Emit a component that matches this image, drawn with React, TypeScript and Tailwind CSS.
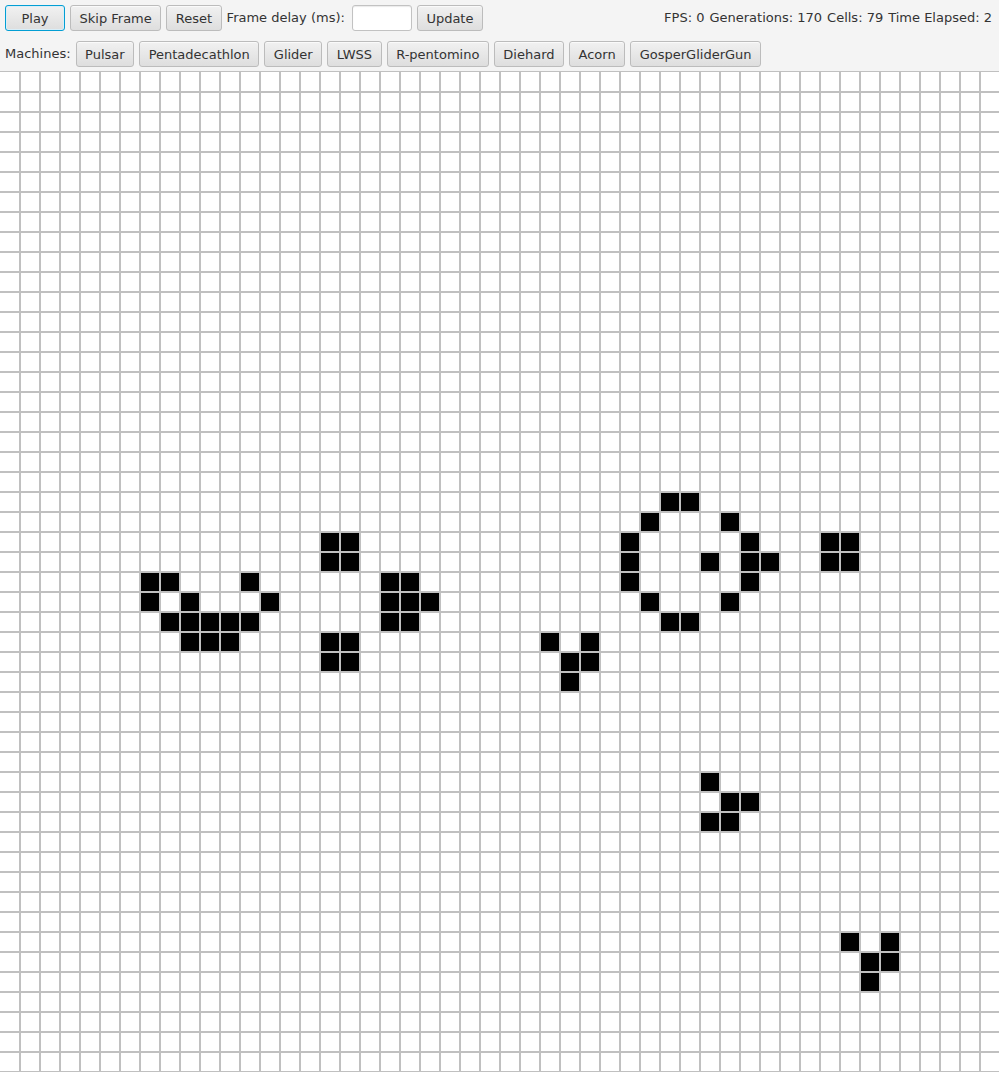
import React from "react";

const COLS = 50;
const ROWS = 50;

const alive: [number, number][] = [
  // pattern 1
  [7, 25], [8, 25], [12, 25],
  [7, 26], [9, 26], [13, 26],
  [8, 27], [9, 27], [10, 27], [11, 27], [12, 27],
  [9, 28], [10, 28], [11, 28],
  // pattern 2
  [16, 23], [17, 23], [16, 24], [17, 24],
  [16, 28], [17, 28], [16, 29], [17, 29],
  [19, 25], [20, 25], [19, 26], [20, 26], [21, 26], [19, 27], [20, 27],
  // pattern 3
  [27, 28], [29, 28], [28, 29], [29, 29], [28, 30],
  // pattern 4
  [33, 21], [34, 21],
  [32, 22], [36, 22],
  [31, 23], [37, 23],
  [31, 24], [35, 24], [37, 24], [38, 24],
  [31, 25], [37, 25],
  [32, 26], [36, 26],
  [33, 27], [34, 27],
  // block
  [41, 23], [42, 23], [41, 24], [42, 24],
  // pattern 5
  [35, 35], [36, 36], [37, 36], [35, 37], [36, 37],
  // pattern 6
  [42, 43], [44, 43], [43, 44], [44, 44], [43, 45],
];

function Btn({ children, focused, className }: { children: React.ReactNode; focused?: boolean; className?: string }) {
  return (
    <button
      className={
        "h-[26px] px-[8.5px] rounded-[3px] border text-[13px] leading-none text-[#333333] whitespace-nowrap flex items-center justify-center bg-gradient-to-b from-[#f1f1f1] to-[#dedede] " +
        (focused
          ? "border-[#039ed3] shadow-[inset_0_0_0_1px_#d9eef8] "
          : "border-[#bcbcbc] shadow-[inset_0_1px_0_#fafafa] ") +
        (className ?? "")
      }
    >
      {children}
    </button>
  );
}

export default function App() {
  return (
    <div
      className="w-[999px] h-[1072px] overflow-hidden bg-[#f4f4f4] flex flex-col"
      style={{ fontFamily: '"DejaVu Sans", "Liberation Sans", sans-serif' }}
    >
      <div className="flex flex-col gap-[10px] pt-[5px] pb-[4px] px-[5px] text-[13px] text-[#333333]">
        <div className="flex items-center gap-[5px] h-[26px]">
          <Btn focused className="w-[60px]">Play</Btn>
          <Btn>Skip Frame</Btn>
          <Btn>Reset</Btn>
          <span className="whitespace-nowrap pr-[2px]">Frame delay (ms):</span>
          <input
            className="w-[60px] h-[26px] bg-white border border-[#c2c2c2] rounded-[3px] outline-none shadow-[inset_0_1px_1px_#eaeaea]"
            type="text"
          />
          <Btn>Update</Btn>
          <div className="ml-auto flex items-center gap-[5px] whitespace-nowrap pr-[2px]">
            <span>FPS: 0</span>
            <span>Generations: 170</span>
            <span>Cells: 79</span>
            <span>Time Elapsed: 2</span>
          </div>
        </div>
        <div className="flex items-center gap-[5px] h-[26px]">
          <span className="whitespace-nowrap">Machines:</span>
          <Btn>Pulsar</Btn>
          <Btn>Pentadecathlon</Btn>
          <Btn>Glider</Btn>
          <Btn>LWSS</Btn>
          <Btn>R-pentomino</Btn>
          <Btn>Diehard</Btn>
          <Btn>Acorn</Btn>
          <Btn>GosperGliderGun</Btn>
        </div>
      </div>
      <svg width={999} height={1001} className="block bg-white" shapeRendering="crispEdges">
        <rect x={0} y={0} width={999} height={1001} fill="#ffffff" />
        {alive.map(([c, r]) => (
          <rect key={`a${c}-${r}`} x={20 * c} y={20 * r + 1} width={20} height={20} fill="#000000" />
        ))}
        <rect x={0} y={0} width={999} height={1} fill="#c0c0c0" />
        {Array.from({ length: ROWS }, (_, i) => (
          <rect key={`h${i}`} x={0} y={20 * (i + 1)} width={999} height={2} fill="#c0c0c0" />
        ))}
        {Array.from({ length: COLS }, (_, i) => (
          <rect key={`v${i}`} x={20 * (i + 1) - 1} y={0} width={2} height={1001} fill="#c0c0c0" />
        ))}
      </svg>
    </div>
  );
}
